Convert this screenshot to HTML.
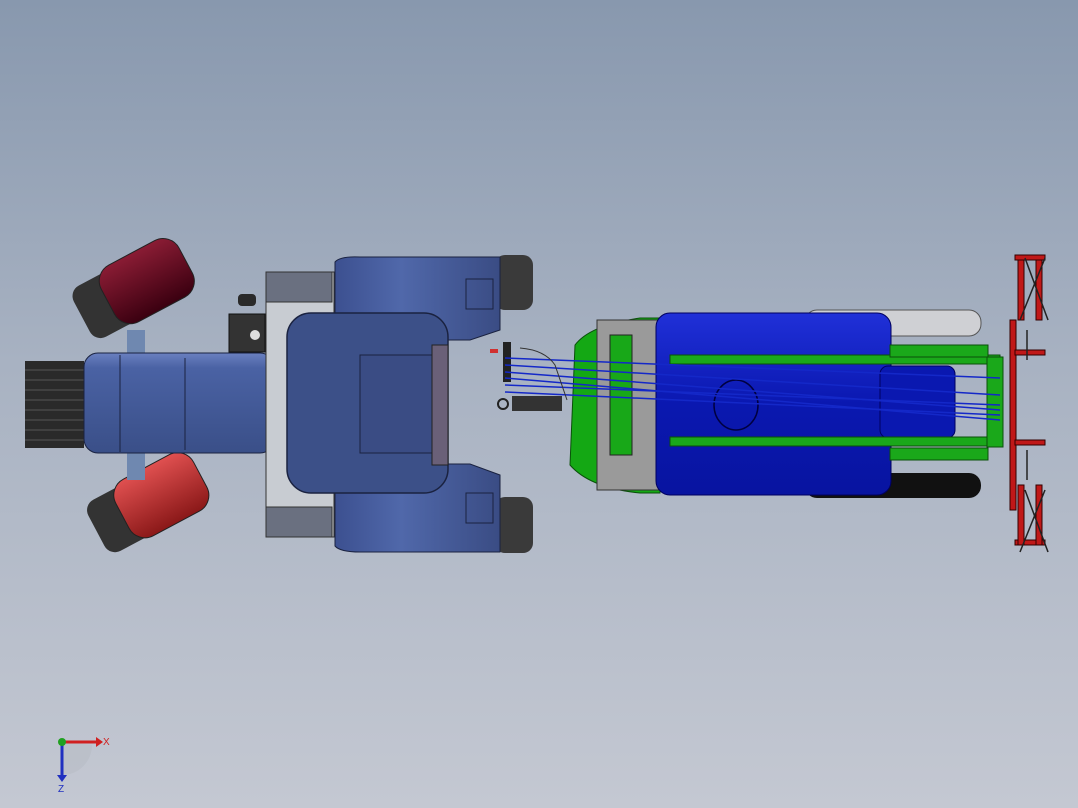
<!DOCTYPE html>
<html><head><meta charset="utf-8"><style>
html,body{margin:0;padding:0;width:1078px;height:808px;overflow:hidden}
body{background:linear-gradient(#8898ae 0%,#a8b2c2 45%,#c4c8d2 100%)}
svg{position:absolute;left:0;top:0}
</style></head><body>
<svg width="1078" height="808" viewBox="0 0 1078 808" xmlns="http://www.w3.org/2000/svg">
<defs>
<linearGradient id="hood" x1="0" y1="0" x2="0" y2="1"><stop offset="0" stop-color="#6a80c0"/><stop offset=".15" stop-color="#4a62a4"/><stop offset="1" stop-color="#3a4f88"/></linearGradient>
<linearGradient id="fend" x1="0" y1="0" x2="1" y2="0"><stop offset="0" stop-color="#3c5090"/><stop offset=".4" stop-color="#5068aa"/><stop offset="1" stop-color="#3a4c84"/></linearGradient>
<linearGradient id="tank" x1="0" y1="0" x2="0" y2="1"><stop offset="0" stop-color="#2030d8"/><stop offset=".5" stop-color="#0a18b0"/><stop offset="1" stop-color="#0814a0"/></linearGradient>
<linearGradient id="red1" x1="0" y1="0" x2="0" y2="1"><stop offset="0" stop-color="#8a1c34"/><stop offset="1" stop-color="#3a0010"/></linearGradient>
<linearGradient id="red2" x1="0" y1="0" x2="0" y2="1"><stop offset="0" stop-color="#e05050"/><stop offset="1" stop-color="#8a1818"/></linearGradient>
</defs>
<!-- front wheels -->
<g transform="rotate(-28 130 290)"><rect x="75" y="262" width="110" height="58" rx="12" fill="#333"/><rect x="105" y="258" width="88" height="64" rx="18" fill="url(#red1)" stroke="#222"/></g>
<g transform="rotate(-28 145 505)"><rect x="90" y="476" width="110" height="58" rx="12" fill="#333"/><rect x="120" y="472" width="88" height="64" rx="18" fill="url(#red2)" stroke="#222"/></g>
<rect x="127" y="330" width="18" height="150" fill="#6f88b0"/>
<!-- grille -->
<rect x="25" y="361" width="59" height="87" fill="#2a2a2a"/>
<g stroke="#555" stroke-width="1"><line x1="25" y1="370" x2="84" y2="370"/><line x1="25" y1="380" x2="84" y2="380"/><line x1="25" y1="390" x2="84" y2="390"/><line x1="25" y1="400" x2="84" y2="400"/><line x1="25" y1="410" x2="84" y2="410"/><line x1="25" y1="420" x2="84" y2="420"/><line x1="25" y1="430" x2="84" y2="430"/><line x1="25" y1="440" x2="84" y2="440"/></g>
<!-- hood -->
<rect x="84" y="353" width="190" height="100" rx="14" fill="url(#hood)" stroke="#1a2240"/>
<line x1="120" y1="355" x2="120" y2="452" stroke="#1a2240"/><line x1="185" y1="358" x2="185" y2="450" stroke="#1a2240"/>
<rect x="229" y="314" width="36" height="38" fill="#333" stroke="#111"/><circle cx="255" cy="335" r="5" fill="#ddd"/>
<rect x="238" y="294" width="18" height="12" rx="4" fill="#2a2a2a"/>
<!-- cab frame -->
<rect x="266" y="272" width="68" height="265" fill="#c8ccd2" stroke="#333"/>
<rect x="266" y="272" width="66" height="30" fill="#6a7080" stroke="#333"/>
<rect x="266" y="507" width="66" height="30" fill="#6a7080" stroke="#333"/>
<!-- rear tires -->
<rect x="495" y="255" width="38" height="55" rx="10" fill="#3a3a3a"/>
<rect x="495" y="497" width="38" height="56" rx="10" fill="#3a3a3a"/>
<!-- fenders -->
<path d="M335 262 Q340 256 360 257 L500 257 L500 330 L470 340 L335 340 Z" fill="url(#fend)" stroke="#1a2240"/>
<path d="M335 464 L470 464 L500 475 L500 552 L360 552 Q340 552 335 546 Z" fill="url(#fend)" stroke="#1a2240"/>
<rect x="466" y="279" width="27" height="30" fill="none" stroke="#1a2240"/>
<rect x="466" y="493" width="27" height="30" fill="none" stroke="#1a2240"/>
<!-- cab roof -->
<rect x="287" y="313" width="161" height="180" rx="24" fill="#3c5088" stroke="#1a2240" stroke-width="1.5"/>
<rect x="360" y="355" width="72" height="98" fill="#3a4c84" stroke="#1a2240"/>
<rect x="432" y="345" width="16" height="120" fill="#6a6078" stroke="#222"/>
<!-- hitch bits -->
<rect x="503" y="342" width="8" height="40" fill="#222"/>
<rect x="490" y="349" width="8" height="4" fill="#d03030"/>
<rect x="512" y="396" width="50" height="15" fill="#333"/><circle cx="503" cy="404" r="5" fill="none" stroke="#222" stroke-width="2"/>
<!-- spare tires -->
<rect x="805" y="310" width="176" height="26" rx="12" fill="#cfd0d4" stroke="#555"/>
<rect x="805" y="473" width="176" height="25" rx="12" fill="#111"/>
<!-- green front -->
<path d="M575 345 Q590 325 640 318 L660 318 L660 493 L640 493 Q590 488 570 465 Z" fill="#14a814" stroke="#0a500a"/>
<rect x="597" y="320" width="62" height="170" fill="#9a9a9a" stroke="#333"/>
<rect x="610" y="335" width="22" height="120" fill="#18a818" stroke="#222"/>
<!-- tank -->
<rect x="656" y="313" width="235" height="182" rx="14" fill="url(#tank)" stroke="#000060"/>
<rect x="880" y="366" width="75" height="72" rx="8" fill="#0a18b0" stroke="#000060"/>
<ellipse cx="736" cy="405" rx="22" ry="25" fill="none" stroke="#000040" stroke-width="1.5"/>
<!-- green frame -->
<g fill="#1aa81a" stroke="#0a500a">
<rect x="670" y="355" width="330" height="9"/>
<rect x="670" y="437" width="330" height="9"/>
<rect x="890" y="345" width="98" height="12"/>
<rect x="890" y="448" width="98" height="12"/>
<rect x="987" y="357" width="16" height="90"/>
</g>
<!-- hoses -->
<g stroke="#1428c8" stroke-width="1.5" fill="none">
<path d="M505 358 L1000 378"/><path d="M505 365 L1000 395"/><path d="M505 372 L1000 410"/><path d="M505 378 L1000 420"/><path d="M505 385 L1000 405"/><path d="M505 392 L1000 415"/>
</g>
<path d="M520 348 Q545 350 555 365 L567 400" stroke="#333" fill="none"/>
<!-- harrow -->
<g fill="#c01818" stroke="#300" stroke-width="1">
<rect x="1010" y="320" width="6" height="190"/>
<rect x="1015" y="255" width="30" height="5"/><rect x="1015" y="540" width="30" height="5"/>
<rect x="1018" y="260" width="6" height="60"/><rect x="1036" y="260" width="6" height="60"/>
<rect x="1018" y="485" width="6" height="60"/><rect x="1036" y="485" width="6" height="60"/>
<rect x="1015" y="350" width="30" height="5"/><rect x="1015" y="440" width="30" height="5"/>
</g>
<g stroke="#222" stroke-width="1.5"><line x1="1025" y1="258" x2="1048" y2="320"/><line x1="1045" y1="258" x2="1020" y2="320"/><line x1="1025" y1="490" x2="1048" y2="552"/><line x1="1045" y1="490" x2="1020" y2="552"/><line x1="1027" y1="330" x2="1027" y2="360"/><line x1="1027" y1="450" x2="1027" y2="480"/></g>
<!-- triad -->
<path d="M62 742 L62 775 A30 30 0 0 0 92 745 Z" fill="#b8bcc4" opacity=".6"/>
<line x1="62" y1="742" x2="96" y2="742" stroke="#d02020" stroke-width="3"/><path d="M96 737 L103 742 L96 747 Z" fill="#d02020"/>
<line x1="62" y1="742" x2="62" y2="775" stroke="#2030c0" stroke-width="3"/><path d="M57 775 L62 782 L67 775 Z" fill="#2030c0"/>
<circle cx="62" cy="742" r="4" fill="#20a020"/>
<text x="103" y="745" font-family="Liberation Sans, sans-serif" font-size="10" fill="#d02020">X</text>
<text x="58" y="792" font-family="Liberation Sans, sans-serif" font-size="10" fill="#2030c0">Z</text>
</svg>
</body></html>
